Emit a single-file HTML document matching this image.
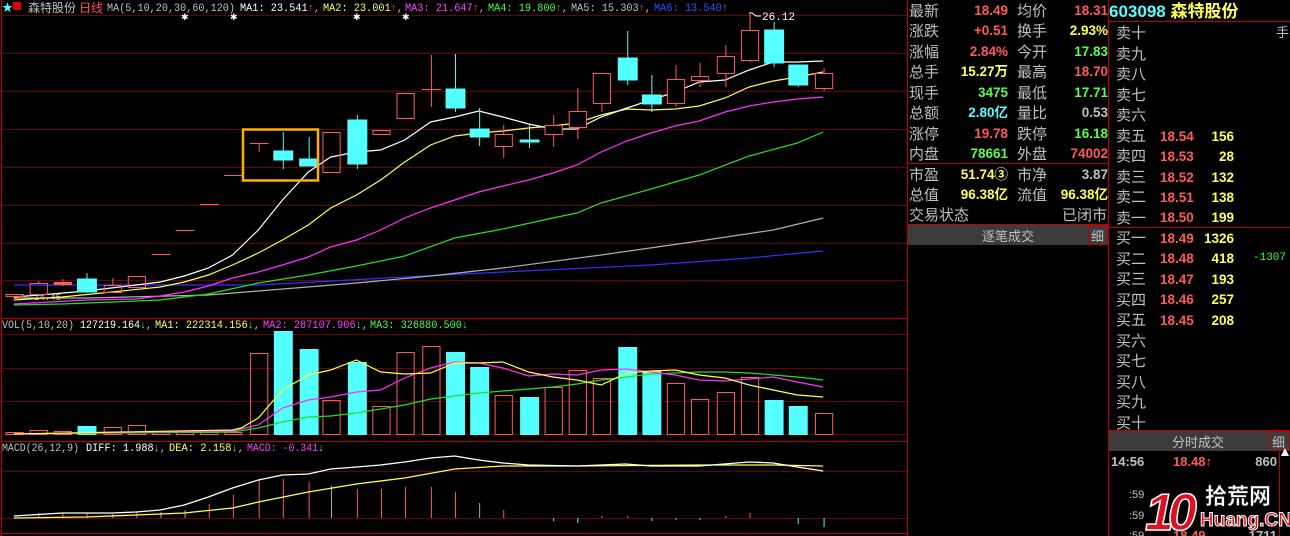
<!DOCTYPE html>
<html><head><meta charset="utf-8"><style>
body{margin:0;background:#000;width:1290px;height:536px;overflow:hidden;font-family:"Liberation Sans","Noto Sans CJK SC",sans-serif}
svg{display:block}
.cn{font-family:"Liberation Sans","Noto Sans CJK SC",sans-serif}
.m{font-family:"Liberation Mono","Noto Sans CJK SC",monospace}
.s *{vector-effect:non-scaling-stroke}
</style></head><body>
<svg width="1290" height="536" viewBox="0 0 1290 536" xmlns="http://www.w3.org/2000/svg">
<rect width="1290" height="536" fill="#000"/>
<g stroke="#6a0000" stroke-width="1">
<line x1="2" y1="15.5" x2="907" y2="15.5"/><line x1="2" y1="53.5" x2="907" y2="53.5"/><line x1="2" y1="91.5" x2="907" y2="91.5"/><line x1="2" y1="129.5" x2="907" y2="129.5"/><line x1="2" y1="167.5" x2="907" y2="167.5"/><line x1="2" y1="205.5" x2="907" y2="205.5"/><line x1="2" y1="243.5" x2="907" y2="243.5"/><line x1="2" y1="280.5" x2="907" y2="280.5"/>
<line x1="2" y1="334.5" x2="907" y2="334.5"/><line x1="2" y1="368.5" x2="907" y2="368.5"/><line x1="2" y1="401.5" x2="907" y2="401.5"/><line x1="2" y1="434.5" x2="907" y2="434.5"/>
<line x1="2" y1="471.5" x2="907" y2="471.5"/><line x1="2" y1="518.5" x2="907" y2="518.5"/>
</g>
<g stroke="#c00000" stroke-width="1">
<line x1="1.5" y1="0" x2="1.5" y2="536"/>
<line x1="2" y1="318.5" x2="907" y2="318.5"/>
<line x1="2" y1="441.5" x2="907" y2="441.5"/>
<line x1="2" y1="533.5" x2="907" y2="533.5"/>
<line x1="907.5" y1="0" x2="907.5" y2="536"/>
<line x1="1108.5" y1="0" x2="1108.5" y2="536"/>
<line x1="908" y1="163.5" x2="1108" y2="163.5"/>
<line x1="908" y1="224.5" x2="1108" y2="224.5"/>
<line x1="1109" y1="21.5" x2="1290" y2="21.5"/>
<line x1="1109" y1="227.5" x2="1290" y2="227.5"/>
<line x1="1109" y1="430.5" x2="1290" y2="430.5"/>
<line x1="1279.5" y1="452" x2="1279.5" y2="536"/>
</g>
<!-- header text -->
<text x="2" y="11" fill="#54ffff" font-size="11">★</text>
<rect x="13" y="2" width="8" height="8" fill="#e00000"/>
<text x="28" y="12" fill="#c0c0c0" class="cn" font-size="12">森特股份</text>
<text x="79" y="12" fill="#ff5050" class="cn" font-size="12">日线</text>
<g class="m" font-size="11">
<text x="107" y="11" fill="#c0c0c0" textLength="128" lengthAdjust="spacingAndGlyphs">MA(5,10,20,30,60,120)</text>
<text x="240" y="11" textLength="80" lengthAdjust="spacingAndGlyphs"><tspan fill="#fff">MA1: 23.541</tspan><tspan fill="#ff5050">↑</tspan><tspan fill="#c0c0c0">,</tspan></text>
<text x="323" y="11" textLength="80" lengthAdjust="spacingAndGlyphs"><tspan fill="#ffff54">MA2: 23.001</tspan><tspan fill="#ff5050">↑</tspan><tspan fill="#c0c0c0">,</tspan></text>
<text x="405" y="11" textLength="80" lengthAdjust="spacingAndGlyphs"><tspan fill="#ff40ff">MA3: 21.647</tspan><tspan fill="#ff5050">↑</tspan><tspan fill="#c0c0c0">,</tspan></text>
<text x="488" y="11" textLength="80" lengthAdjust="spacingAndGlyphs"><tspan fill="#40ff40">MA4: 19.800</tspan><tspan fill="#ff5050">↑</tspan><tspan fill="#c0c0c0">,</tspan></text>
<text x="571" y="11" textLength="80" lengthAdjust="spacingAndGlyphs"><tspan fill="#c0c0c0">MA5: 15.303</tspan><tspan fill="#ff5050">↑</tspan><tspan fill="#c0c0c0">,</tspan></text>
<text x="654" y="11" textLength="74" lengthAdjust="spacingAndGlyphs"><tspan fill="#3050ff">MA6: 13.540</tspan><tspan fill="#ff5050">↑</tspan></text>
</g>
<g fill="#fff" font-size="9"><text x="181" y="20">✱</text><text x="230" y="20">✱</text><text x="353" y="20">✱</text><text x="402" y="20">✱</text></g>
<text x="762" y="20" fill="#fff" font-size="11" class="m">26.12</text>
<polyline points="749,13 752,13 756,16 761,16" fill="none" stroke="#fff"/>
<text x="34" y="300" fill="#c0c0c0" font-size="9" class="m">14.45</text>

<g class="s" transform="scale(1.7222,1)">
<g fill="none" stroke-width="1.2">
<polyline stroke="#3030ff" points="8,285 150,285 235,277 292,272 378,265 435,258 478,251"/>
<polyline stroke="#b0b0b0" points="8,298 50,298 121,295 150,291 207,283 250,276 292,268 349,255 406,241 449,230 478,218"/>
<polyline stroke="#20e020" points="8,305 36,304 65,302 93,300 121,294 150,283 179,275 207,266 235,256 264,238 292,229 321,218 335,213 349,203 378,189 406,175 435,156 463,143 478,132"/>
<polyline stroke="#ff30ff" points="8,304 50,300 79,299 93,296 107,292 121,286 135,278 150,272 164,265 179,257 192,247 207,240 221,230 235,218 250,208 264,200 278,192 292,186 307,180 321,173 335,165 349,152 364,141 378,133 392,126 406,121 421,112 435,106 449,102 463,99 478,97"/>
<polyline stroke="#ffff40" points="8,300 36,297 65,292 93,287 107,282 121,275 135,265 150,253 164,240 179,225 192,208 207,195 221,180 235,162 250,145 264,136 278,133 292,131 307,128 321,126 335,123 349,115 364,109 378,110 392,109 406,106 421,98 435,87 449,81 463,77 478,72"/>
<polyline stroke="#ffffff" points="8,297 30,294 50,291 79,285 93,282 107,276 121,268 135,255 150,230 164,200 179,172 192,157 207,152 221,150 235,140 250,122 264,117 278,111 292,117 307,124 321,129 335,129 349,117 364,108 378,100 392,92 406,82 421,80 435,70 449,62 463,62 478,61"/>
</g>
<g stroke="#ff5a5a" fill="none" stroke-width="1">
<rect x="3.5" y="294.5" width="10" height="2"/>
<line x1="22.5" y1="281" x2="22.5" y2="283"/><rect x="17.5" y="283.5" width="10" height="11"/>
<line x1="36.5" y1="279" x2="36.5" y2="286"/><rect x="31.5" y="282.5" width="10" height="2" fill="#ff5a5a"/>
<line x1="65.5" y1="278" x2="65.5" y2="285"/><rect x="60.5" y="285.5" width="10" height="7"/>
<rect x="74.5" y="276.5" width="10" height="11"/>
<line x1="88" y1="254.5" x2="99" y2="254.5"/>
<line x1="102" y1="230.5" x2="113" y2="230.5"/>
<line x1="116" y1="204.5" x2="127" y2="204.5"/>
<line x1="130" y1="175.5" x2="141" y2="175.5"/>
<line x1="145" y1="143.5" x2="156" y2="143.5"/><line x1="150.5" y1="143" x2="150.5" y2="152"/>
<rect x="187.5" y="132.5" width="10" height="40"/>
<rect x="216.5" y="130.5" width="10" height="4"/>
<rect x="230.5" y="93.5" width="10" height="25"/>
<line x1="250.5" y1="55" x2="250.5" y2="107"/><line x1="245" y1="89.5" x2="256" y2="89.5"/>
<line x1="292.5" y1="125" x2="292.5" y2="158"/><rect x="287.5" y="134.5" width="10" height="12" fill="#000"/>
<line x1="321.5" y1="115" x2="321.5" y2="147"/><rect x="316.5" y="125.5" width="10" height="9" fill="#000"/>
<line x1="335.5" y1="88" x2="335.5" y2="139"/><rect x="330.5" y="111.5" width="10" height="16" fill="#000"/>
<line x1="349.5" y1="103" x2="349.5" y2="112"/><rect x="344.5" y="73.5" width="10" height="30" fill="#000"/>
<line x1="392.5" y1="65" x2="392.5" y2="107"/><rect x="387.5" y="79.5" width="10" height="24" fill="#000"/>
<line x1="406.5" y1="63" x2="406.5" y2="87"/><rect x="401.5" y="76.5" width="10" height="4" fill="#000"/>
<line x1="421.5" y1="45" x2="421.5" y2="87"/><rect x="416.5" y="56.5" width="10" height="17" fill="#000"/>
<line x1="435.5" y1="12" x2="435.5" y2="62"/><rect x="430.5" y="30.5" width="10" height="30" fill="#000"/>
<line x1="478.5" y1="68" x2="478.5" y2="91"/><rect x="473.5" y="73.5" width="10" height="15" fill="#000"/>
</g>
<g stroke="#54ffff" fill="#54ffff">
<line x1="50.5" y1="273" x2="50.5" y2="293"/><rect x="45" y="279" width="11" height="13"/>
<line x1="164.5" y1="132" x2="164.5" y2="169"/><rect x="159" y="151" width="11" height="9"/>
<line x1="179.5" y1="137" x2="179.5" y2="166"/><rect x="174" y="159" width="11" height="7"/>
<line x1="207.5" y1="115" x2="207.5" y2="169"/><rect x="202" y="120" width="11" height="44"/>
<line x1="264.5" y1="54" x2="264.5" y2="112"/><rect x="259" y="89" width="11" height="19"/>
<line x1="278.5" y1="108" x2="278.5" y2="146"/><rect x="273" y="129" width="11" height="8"/>
<line x1="307.5" y1="125" x2="307.5" y2="148"/><rect x="302" y="140" width="11" height="2"/>
<line x1="364.5" y1="31" x2="364.5" y2="85"/><rect x="359" y="58" width="11" height="22"/>
<line x1="378.5" y1="75" x2="378.5" y2="112"/><rect x="373" y="95" width="11" height="9"/>
<line x1="449.5" y1="22" x2="449.5" y2="67"/><rect x="444" y="30" width="11" height="33"/>
<line x1="463.5" y1="65" x2="463.5" y2="87"/><rect x="458" y="65" width="11" height="20"/>
</g>

<g stroke="#ff5a5a" fill="none">
<rect x="3.5" y="432.5" width="10" height="2"/><rect x="17.5" y="430.5" width="10" height="4"/><rect x="31.5" y="431.5" width="10" height="3"/>
<rect x="60.5" y="427.5" width="10" height="7"/><rect x="74.5" y="425.5" width="10" height="9"/>
<rect x="88.5" y="432.5" width="10" height="2"/><rect x="102.5" y="432.5" width="10" height="2"/><rect x="116.5" y="432.5" width="10" height="2"/><rect x="130.5" y="432.5" width="10" height="2"/>
<rect x="145.5" y="353.5" width="10" height="81"/>
<rect x="187.5" y="400.5" width="10" height="34"/>
<rect x="216.5" y="406.5" width="10" height="28"/>
<rect x="230.5" y="352.5" width="10" height="82"/>
<rect x="245.5" y="346.5" width="10" height="88"/>
<rect x="287.5" y="395.5" width="10" height="39"/>
<rect x="316.5" y="387.5" width="10" height="47"/>
<rect x="330.5" y="370.5" width="10" height="64"/>
<rect x="344.5" y="378.5" width="10" height="56"/>
<rect x="387.5" y="383.5" width="10" height="51"/>
<rect x="401.5" y="399.5" width="10" height="35"/>
<rect x="416.5" y="392.5" width="10" height="42"/>
<rect x="430.5" y="377.5" width="10" height="57"/>
<rect x="473.5" y="413.5" width="10" height="21"/>
</g>
<g fill="#54ffff">
<rect x="45" y="426" width="11" height="9"/><rect x="159" y="331" width="11" height="104"/><rect x="174" y="349" width="11" height="86"/>
<rect x="202" y="362" width="11" height="73"/><rect x="259" y="352" width="11" height="83"/><rect x="273" y="367" width="11" height="68"/>
<rect x="302" y="397" width="11" height="38"/><rect x="359" y="347" width="11" height="88"/><rect x="373" y="371" width="11" height="64"/>
<rect x="444" y="400" width="11" height="35"/><rect x="458" y="406" width="11" height="29"/>
</g>
<g fill="none" stroke-width="1.2">
<polyline stroke="#20e020" points="8,434 135,432 150,428 164,422 179,417 192,416 207,413 221,409 235,405 250,399 264,396 278,393 292,391 307,389 321,387 335,384 349,380 364,377 378,374 392,373 406,372 421,372 435,373 449,375 463,377 478,380"/>
<polyline stroke="#ff30ff" points="8,434 135,431 150,425 164,408 179,400 192,397 207,392 221,390 235,378 250,368 264,362 278,363 292,368 307,376 321,374 335,375 349,370 364,369 378,372 392,375 406,380 421,381 435,379 449,377 463,382 478,387"/>
<polyline stroke="#ffff40" points="8,434 135,430 140,428 150,418 164,390 179,375 192,370 207,360 221,372 235,374 250,373 264,363 278,363 292,362 307,372 321,377 335,380 349,385 364,373 378,371 392,370 406,375 421,378 435,385 449,390 463,395 478,397"/>
</g>

<g stroke="#ff5a5a" stroke-width="1">
<line x1="22.5" y1="513" x2="22.5" y2="518"/><line x1="36.5" y1="513" x2="36.5" y2="518"/><line x1="50.5" y1="513" x2="50.5" y2="518"/><line x1="65.5" y1="514" x2="65.5" y2="518"/><line x1="79.5" y1="512" x2="79.5" y2="518"/>
<line x1="93.5" y1="512" x2="93.5" y2="518" stroke="#aaa"/><line x1="107.5" y1="510" x2="107.5" y2="518" stroke="#aaa"/>
<line x1="121.5" y1="504" x2="121.5" y2="518"/><line x1="135.5" y1="495" x2="135.5" y2="518"/><line x1="150.5" y1="480" x2="150.5" y2="518"/><line x1="164.5" y1="479" x2="164.5" y2="518"/><line x1="179.5" y1="482" x2="179.5" y2="518"/>
<line x1="192.5" y1="486" x2="192.5" y2="518" stroke="#aaa"/><line x1="207.5" y1="489" x2="207.5" y2="518"/><line x1="221.5" y1="489" x2="221.5" y2="518"/><line x1="235.5" y1="487" x2="235.5" y2="518"/><line x1="250.5" y1="487" x2="250.5" y2="518"/><line x1="264.5" y1="492" x2="264.5" y2="518"/>
<line x1="278.5" y1="503" x2="278.5" y2="518" stroke="#aaa"/><line x1="292.5" y1="510" x2="292.5" y2="518"/>
<line x1="349.5" y1="516" x2="349.5" y2="518"/><line x1="364.5" y1="516" x2="364.5" y2="518"/><line x1="421.5" y1="516" x2="421.5" y2="518"/><line x1="435.5" y1="513" x2="435.5" y2="518"/>
</g>
<g stroke="#54ffff"><line x1="321.5" y1="518" x2="321.5" y2="521"/><line x1="335.5" y1="518" x2="335.5" y2="523"/><line x1="378.5" y1="518" x2="378.5" y2="521"/><line x1="392.5" y1="518" x2="392.5" y2="520"/><line x1="406.5" y1="518" x2="406.5" y2="520"/><line x1="463.5" y1="518" x2="463.5" y2="524"/><line x1="478.5" y1="518" x2="478.5" y2="527"/></g>
<g fill="none" stroke-width="1.3">
<polyline stroke="#ffff40" points="8,518 50,517 79,515 107,513 135,508 150,502 179,492 207,484 235,478 264,469 292,466 335,466 406,465 449,465 478,466"/>
<polyline stroke="#ffffff" points="8,516 36,513 65,513 79,512 93,510 107,505 121,497 135,488 150,480 164,475 179,474 192,469 207,467 221,465 235,462 250,458 264,456 278,460 292,463 307,465 335,466 363,464 378,466 406,466 435,462 449,463 463,467 478,471"/>
</g>
</g>
<rect x="243" y="129.5" width="75" height="51" fill="none" stroke="#ffb000" stroke-width="2.5"/>

<g class="m" font-size="11">
<text x="2" y="328" fill="#c0c0c0" textLength="72" lengthAdjust="spacingAndGlyphs">VOL(5,10,20)</text>
<text x="80" y="328" textLength="72" lengthAdjust="spacingAndGlyphs"><tspan fill="#fff">127219.164</tspan><tspan fill="#40ff40">↓</tspan><tspan fill="#c0c0c0">,</tspan></text>
<text x="155" y="328" textLength="105" lengthAdjust="spacingAndGlyphs"><tspan fill="#ffff54">MA1: 222314.156</tspan><tspan fill="#40ff40">↓</tspan><tspan fill="#c0c0c0">,</tspan></text>
<text x="263" y="328" textLength="105" lengthAdjust="spacingAndGlyphs"><tspan fill="#ff40ff">MA2: 287107.906</tspan><tspan fill="#40ff40">↓</tspan><tspan fill="#c0c0c0">,</tspan></text>
<text x="370" y="328" textLength="98" lengthAdjust="spacingAndGlyphs" fill="#40ff40">MA3: 326880.500↓</text>
<text x="2" y="451" fill="#c0c0c0" textLength="77" lengthAdjust="spacingAndGlyphs">MACD(26,12,9)</text>
<text x="86" y="451" textLength="80" lengthAdjust="spacingAndGlyphs"><tspan fill="#fff">DIFF: 1.988</tspan><tspan fill="#40ff40">↓</tspan><tspan fill="#c0c0c0">,</tspan></text>
<text x="169" y="451" textLength="75" lengthAdjust="spacingAndGlyphs"><tspan fill="#ffff54">DEA: 2.158</tspan><tspan fill="#40ff40">↓</tspan><tspan fill="#c0c0c0">,</tspan></text>
<text x="247" y="451" textLength="77" lengthAdjust="spacingAndGlyphs"><tspan fill="#ff40ff">MACD: -0.341</tspan><tspan fill="#40ff40">↓</tspan></text>
</g>

<!-- right info panel -->
<g font-size="15" fill="#c0c0c0" class="cn">
<text x="909" y="16">最新</text><text x="909" y="36">涨跌</text><text x="909" y="57">涨幅</text><text x="909" y="77">总手</text><text x="909" y="98">现手</text><text x="909" y="118">总额</text><text x="909" y="139">涨停</text><text x="909" y="159">内盘</text>
<text x="909" y="180">市盈</text><text x="909" y="200">总值</text><text x="909" y="220">交易状态</text>
<text x="1017" y="16">均价</text><text x="1017" y="36">换手</text><text x="1017" y="57">今开</text><text x="1017" y="77">最高</text><text x="1017" y="98">最低</text><text x="1017" y="118">量比</text><text x="1017" y="139">跌停</text><text x="1017" y="159">外盘</text>
<text x="1017" y="180">市净</text><text x="1017" y="200">流值</text><text x="1107" y="220" text-anchor="end">已闭市</text>
</g>
<g font-size="13.5" font-weight="bold" text-anchor="end" class="cn">
<text x="1008" y="15" fill="#ff5a5a">18.49</text><text x="1008" y="35" fill="#ff5a5a">+0.51</text><text x="1008" y="56" fill="#ff5a5a">2.84%</text><text x="1008" y="76" fill="#ffff54">15.27万</text><text x="1008" y="97" fill="#54ff54">3475</text><text x="1008" y="117" fill="#54ffff">2.80亿</text><text x="1008" y="138" fill="#ff5a5a">19.78</text><text x="1008" y="158" fill="#54ff54">78661</text>
<text x="1008" y="179" fill="#ffff54">51.74③</text><text x="1008" y="199" fill="#ffff54">96.38亿</text>
<text x="1108" y="15" fill="#ff5a5a">18.31</text><text x="1108" y="35" fill="#ffff54">2.93%</text><text x="1108" y="56" fill="#54ff54">17.83</text><text x="1108" y="76" fill="#ff5a5a">18.70</text><text x="1108" y="97" fill="#54ff54">17.71</text><text x="1108" y="117" fill="#c0c0c0">0.53</text><text x="1108" y="138" fill="#54ff54">16.18</text><text x="1108" y="158" fill="#ff5a5a">74002</text>
<text x="1108" y="179" fill="#c0c0c0">3.87</text><text x="1108" y="199" fill="#ffff54">96.38亿</text>
</g>
<rect x="908" y="225" width="200" height="20" fill="#3c3c3c"/>
<rect x="1088.5" y="225.5" width="19" height="19" fill="#3c3c3c" stroke="#c00000"/>
<text x="1008" y="241" fill="#c0c0c0" font-size="13" text-anchor="middle" class="cn">逐笔成交</text>
<text x="1091" y="241" fill="#c0c0c0" font-size="13" class="cn">细</text>

<text x="1109" y="17" font-size="17" font-weight="bold" class="cn"><tspan fill="#54ffff">603098</tspan><tspan fill="#ffff54"> 森特股份</tspan></text>
<g font-size="15" fill="#c0c0c0" class="cn">
<text x="1116" y="38">卖十</text><text x="1116" y="59">卖九</text><text x="1116" y="79">卖八</text><text x="1116" y="100">卖七</text><text x="1116" y="120">卖六</text><text x="1116" y="141">卖五</text><text x="1116" y="161">卖四</text><text x="1116" y="182">卖三</text><text x="1116" y="202">卖二</text><text x="1116" y="223">卖一</text>
<text x="1116" y="243">买一</text><text x="1116" y="264">买二</text><text x="1116" y="284">买三</text><text x="1116" y="305">买四</text><text x="1116" y="325">买五</text><text x="1116" y="346">买六</text><text x="1116" y="366">买七</text><text x="1116" y="387">买八</text><text x="1116" y="407">买九</text><text x="1116" y="428">买十</text>
<text x="1276" y="37" font-size="13">手</text>
</g>
<g font-size="13.5" font-weight="bold" class="cn">
<g fill="#ff5a5a"><text x="1160" y="141">18.54</text><text x="1160" y="161">18.53</text><text x="1160" y="182">18.52</text><text x="1160" y="202">18.51</text><text x="1160" y="222">18.50</text><text x="1160" y="243">18.49</text><text x="1160" y="263">18.48</text><text x="1160" y="284">18.47</text><text x="1160" y="304">18.46</text><text x="1160" y="325">18.45</text></g>
<g fill="#ffff54" text-anchor="end"><text x="1234" y="141">156</text><text x="1234" y="161">28</text><text x="1234" y="182">132</text><text x="1234" y="202">138</text><text x="1234" y="222">199</text><text x="1234" y="243">1326</text><text x="1234" y="263">418</text><text x="1234" y="284">193</text><text x="1234" y="304">257</text><text x="1234" y="325">208</text></g>
</g>
<text x="1253" y="260" fill="#40ff40" font-size="11" class="m">-1307</text>
<rect x="1109" y="431" width="181" height="20" fill="#3c3c3c"/>
<rect x="1269.5" y="431.5" width="20" height="19" fill="#3c3c3c" stroke="#c00000"/>
<text x="1198" y="447" fill="#c0c0c0" font-size="13" text-anchor="middle" class="cn">分时成交</text>
<text x="1272" y="447" fill="#c0c0c0" font-size="13" class="cn">细</text>
<polygon points="1285,448 1281,456 1289,456" fill="#fff"/>
<g font-size="13" font-weight="bold" class="cn">
<text x="1111" y="466" fill="#c0c0c0">14:56</text><text x="1173" y="466" fill="#ff5a5a">18.48↑</text><text x="1277" y="466" fill="#c0c0c0" text-anchor="end">860</text>
<text x="1129" y="498" fill="#c0c0c0" font-size="11" font-weight="normal">:59</text>
<text x="1129" y="519" fill="#c0c0c0" font-size="11" font-weight="normal">:59</text>
<text x="1129" y="539" fill="#c0c0c0" font-size="11" font-weight="normal">:59</text>
<text x="1173" y="540" fill="#ff5a5a">18.49</text><text x="1277" y="540" fill="#c0c0c0" text-anchor="end">1711</text>
</g>
<text x="1145" y="530" fill="#e01020" stroke="#fff" stroke-width="1.5" font-size="52" font-weight="bold" font-style="italic" class="cn" letter-spacing="-6">10</text>
<text x="1205" y="504" fill="#fff" stroke="#333" stroke-width="0.5" font-size="22" font-weight="bold" class="cn">拾荒网</text>
<text x="1200" y="526" fill="#e01020" stroke="#fff" stroke-width="1" font-size="19" font-weight="bold" class="cn">Huang.CN</text>
</svg>
</body></html>
